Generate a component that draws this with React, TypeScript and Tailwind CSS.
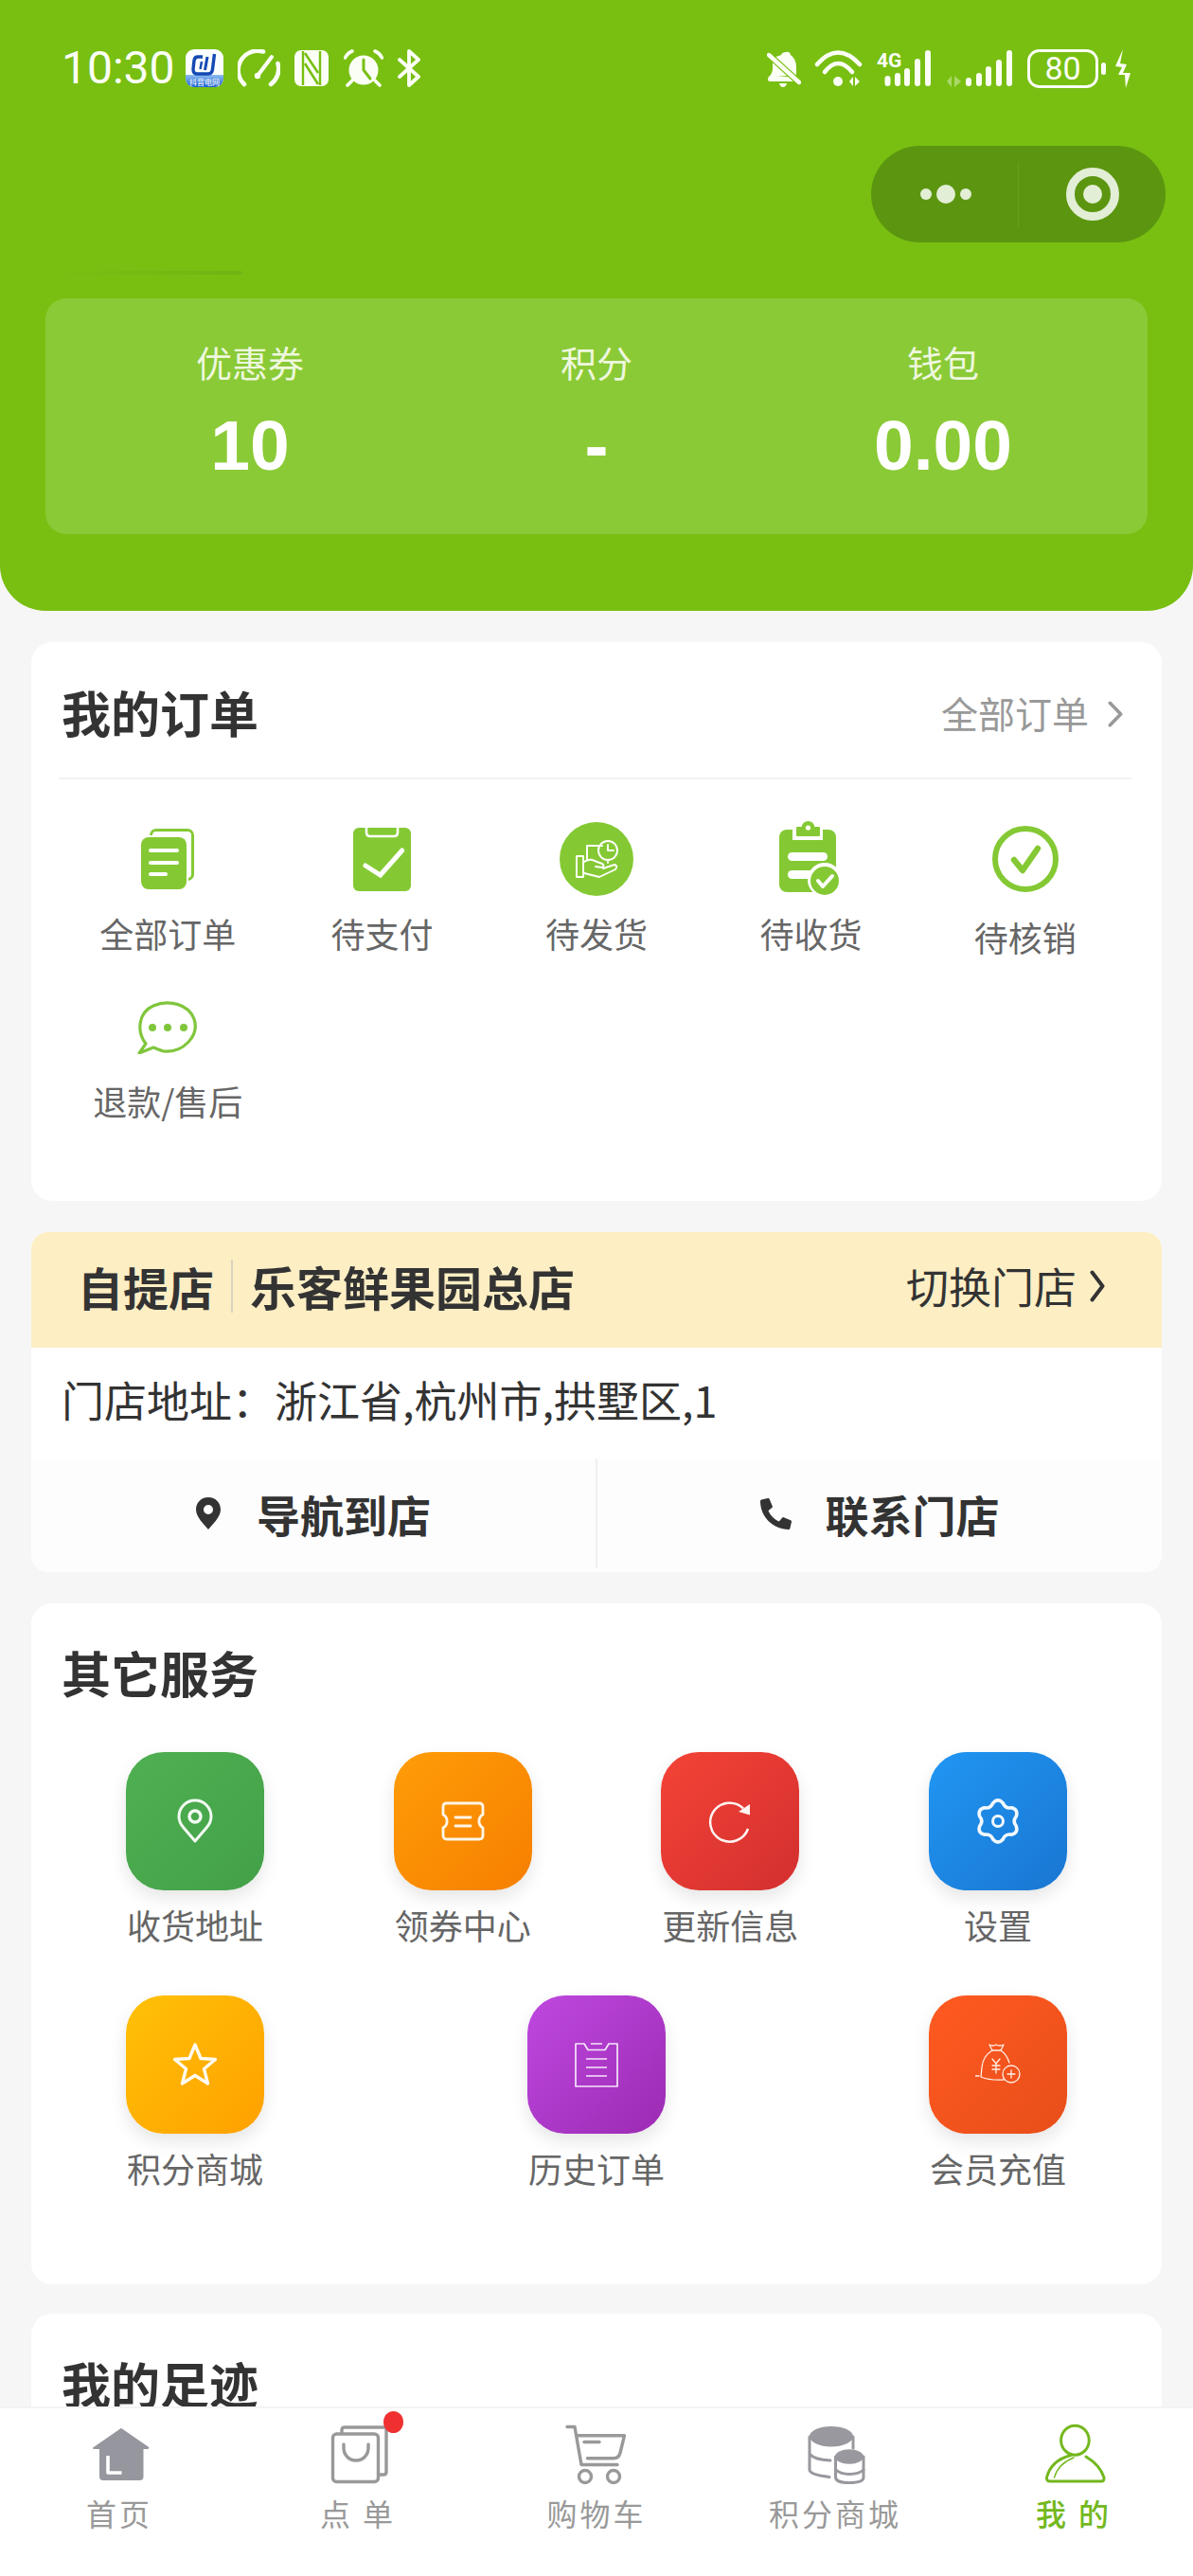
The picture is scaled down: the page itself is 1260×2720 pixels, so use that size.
import React from "react";
import { FaPhoneAlt } from "react-icons/fa";

const G = "#84c934";

const gearPath = (() => {
  const c = 24;
  const pt = (deg: number, r: number) => {
    const a = (deg * Math.PI) / 180;
    return `${(c + r * Math.cos(a)).toFixed(2)} ${(c + r * Math.sin(a)).toFixed(2)}`;
  };
  let d = `M${pt(-90 - 15, 20)}`;
  for (let i = 0; i < 6; i++) {
    const a = -90 + i * 60;
    d += ` Q${pt(a, 25)} ${pt(a + 15, 20)}`;
    d += ` Q${pt(a + 30, 15)} ${pt(a + 45, 20)}`;
  }
  return d + " Z";
})();

function AppIcon() {
  return (
    <svg width="40" height="40" viewBox="0 0 40 40">
      <defs>
        <linearGradient id="appBlue" x1="0" y1="0" x2="0" y2="1">
          <stop offset="0" stopColor="#8fbdf0" />
          <stop offset="1" stopColor="#1a5fd0" />
        </linearGradient>
        <clipPath id="appClip">
          <rect width="40" height="40" rx="9" />
        </clipPath>
      </defs>
      <g clipPath="url(#appClip)">
        <rect width="40" height="40" fill="#fbfdff" />
        <rect y="27" width="40" height="13" fill="url(#appBlue)" />
      </g>
      <path d="M18 8 H13 Q9.5 8 9 12 L8 21 Q8 26 12 26 H24 Q28 26 28.5 21 L30.5 5" fill="none" stroke="#1349b4" strokeWidth="3.4" />
      <path d="M23 8 L20.5 22" fill="none" stroke="#1349b4" strokeWidth="3" />
      <path d="M17 13 L15.5 21" fill="none" stroke="#1349b4" strokeWidth="2.4" />
      <text x="20" y="38" textAnchor="middle" fontSize="8" fill="#ffffff" fontFamily="'Noto Sans CJK SC', sans-serif">抖音电网</text>
    </svg>
  );
}

function Gauge() {
  return (
    <svg width="45" height="40" viewBox="0 0 45 40" fill="none" stroke="#fbfef5" strokeWidth="4.6" strokeLinecap="round">
      <path d="M7 37 A20.5 20.5 0 0 1 27 2.5" />
      <path d="M42.5 15 A20.5 20.5 0 0 1 35 37" />
      <path d="M21 28 L36 8" strokeWidth="4" />
      <circle cx="21" cy="28" r="3.2" fill="#fbfef5" stroke="none" />
    </svg>
  );
}

function Nfc() {
  return (
    <svg width="36" height="40" viewBox="0 0 36 40" fill="none">
      <rect y="1" width="36" height="38" rx="7" fill="#fbfef5" />
      <path d="M9 2 V38 M27 2 V38" stroke="#78bf12" strokeWidth="2.4" />
      <path d="M11 4 L25 25 M11 15 L25 37" stroke="#78bf12" strokeWidth="2.6" />
    </svg>
  );
}

function Alarm() {
  return (
    <svg width="42" height="40" viewBox="0 0 42 40" fill="none" strokeLinecap="round">
      <circle cx="21" cy="22" r="15.5" fill="#fbfef5" />
      <path d="M21 11 V22 L28 31" stroke="#78bf12" strokeWidth="3" />
      <path d="M1.5 9 Q4 4 9 2 M33 2 Q38 4 40.5 9" stroke="#fbfef5" strokeWidth="3.6" />
      <path d="M9 33 L4 38 M33 33 L38 38" stroke="#fbfef5" strokeWidth="3.6" />
    </svg>
  );
}

function Bluetooth() {
  return (
    <svg width="26" height="40" viewBox="0 0 26 40" fill="none" stroke="#fbfef5" strokeWidth="3.8" strokeLinejoin="round" strokeLinecap="round">
      <path d="M3 11 L23 29 L13 38 V2 L23 11 L3 29" />
    </svg>
  );
}

function BellOff() {
  return (
    <svg width="36" height="40" viewBox="0 0 36 40" fill="none">
      <path d="M20 3 Q24 2 25 6 Q31 10 31 19 V27 L1 30 Q6 26 6 20 V11 Q10 7 15 6 Q16 3 20 3 Z" fill="#fbfef5" />
      <path d="M1 32 Q1 29 4 29 H29 L34 34 H2 Z" fill="#fbfef5" />
      <path d="M13 36 H21 Q20 40 17 40 Q14 40 13 36 Z" fill="#fbfef5" />
      <path d="M1 5 L35 36" stroke="#78bf12" strokeWidth="7" />
      <path d="M2 6 L34 35" stroke="#fbfef5" strokeWidth="4.4" strokeLinecap="round" />
    </svg>
  );
}

function Wifi() {
  return (
    <svg width="51" height="40" viewBox="0 0 51 40" fill="none" stroke="#fbfef5" strokeLinecap="round">
      <path d="M3 16 Q25 -9 48 16" strokeWidth="4.6" />
      <path d="M11 24 Q25 6 40 24" strokeWidth="4.6" />
      <circle cx="25" cy="34" r="5" fill="#fbfef5" stroke="none" />
      <path d="M37 34 L41 29 V39 Z M43 29 V39 L48 34 Z" fill="#fbfef5" stroke="none" />
    </svg>
  );
}

function Bars({ xs, tops }: { xs: number[]; tops: number[] }) {
  return (
    <>
      {xs.map((x, i) => (
        <rect key={i} x={x - 3} y={tops[i]} width="6" height={39 - tops[i]} rx="3" fill="#fbfef5" />
      ))}
    </>
  );
}

function Signal4G() {
  return (
    <svg width="58" height="40" viewBox="0 0 58 40">
      <text x="0" y="19" fontSize="21" fontWeight="700" fill="#fbfef5" fontFamily="'Roboto', sans-serif">4G</text>
      <Bars xs={[11.5, 22, 32, 43, 54]} tops={[28, 25, 20, 10, 1]} />
    </svg>
  );
}

function Signal2() {
  return (
    <svg width="71" height="40" viewBox="0 0 71 40">
      <path d="M1 34 L6 28 V40 Z M9 28 V40 L16 34 Z" fill="#a9d868" />
      <Bars xs={[24, 35, 45, 56, 67]} tops={[30, 25, 18, 11, 1]} />
    </svg>
  );
}

function Battery() {
  return (
    <svg width="85" height="41" viewBox="0 0 85 41" fill="none">
      <rect x="1.5" y="1.5" width="72" height="38" rx="11" stroke="#fbfef5" strokeWidth="3" />
      <text x="37.5" y="32" textAnchor="middle" fontSize="34" fill="#fbfef5" fontFamily="'Roboto', sans-serif">80</text>
      <rect x="78" y="14" width="5" height="13" rx="2.5" fill="#fbfef5" />
    </svg>
  );
}

function Bolt() {
  return (
    <svg width="18" height="41" viewBox="0 0 18 41">
      <polygon points="9,0 1,18 8,19 4,27 11,27 12,41 17,25 9,25 13,16 6,15" fill="#fbfef5" />
    </svg>
  );
}

function Chevron({ color, w, h, sw }: { color: string; w: number; h: number; sw: number }) {
  return (
    <svg width={w} height={h} viewBox={`0 0 ${w} ${h}`} fill="none" stroke={color} strokeWidth={sw} strokeLinecap="round" strokeLinejoin="round">
      <path d={`M${sw / 2 + 0.5} ${sw / 2 + 0.5} L${w - sw / 2 - 0.5} ${h / 2} L${sw / 2 + 0.5} ${h - sw / 2 - 0.5}`} />
    </svg>
  );
}

function OrderAll() {
  return (
    <svg width="56" height="64" viewBox="0 0 56 64">
      <rect x="9" y="0" width="47" height="55" rx="7" fill={G} />
      <rect x="12" y="3" width="41" height="49" rx="4" fill="#fff" />
      <rect x="-1" y="7" width="51" height="58" rx="9" fill="#fff" />
      <rect x="0" y="9" width="48" height="55" rx="8" fill={G} />
      <path d="M10 23 H38 M10 36 H38 M10 48 H26" stroke="#fff" strokeWidth="4" strokeLinecap="round" fill="none" />
    </svg>
  );
}

function OrderPay() {
  return (
    <svg width="61" height="67" viewBox="0 0 61 67" fill="none">
      <rect width="61" height="67" rx="6" fill={G} />
      <path d="M14 0 V5 Q14 9 18 9 H43 Q47 9 47 5 V0" stroke="#fff" strokeWidth="2.6" />
      <path d="M13 40 L28.7 50 L51.7 24" stroke="#fff" strokeWidth="5" strokeLinecap="round" />
    </svg>
  );
}

function OrderShip() {
  return (
    <svg width="78" height="78" viewBox="-39 -39 78 78" fill="none">
      <circle r="39" fill={G} />
      <g stroke="#fff" strokeWidth="1.9" strokeLinejoin="round" strokeLinecap="round">
        <rect x="-21" y="-3" width="7" height="22" />
        <path d="M-10 0 V-14 H6" />
        <path d="M12 2 V4" />
        <circle cx="12" cy="-9" r="10" />
        <path d="M12 -15 V-9 H18" />
        <path d="M-13 3 Q-7 -1 -2 2 L6 5 Q9 7 6 9 L-1 8" />
        <path d="M-13 15 L3 19 L20 11 Q23 7 19 6 L7 10" />
      </g>
    </svg>
  );
}

function OrderReceive() {
  return (
    <svg width="66" height="80" viewBox="0 0 66 80" fill="none">
      <rect x="0" y="9" width="60" height="66" rx="8" fill={G} />
      <rect x="14" y="8" width="32" height="12" fill="#fff" />
      <rect x="18" y="6" width="25" height="10" rx="1" fill={G} />
      <circle cx="30.5" cy="7" r="7" fill={G} />
      <circle cx="30.5" cy="7" r="2.6" fill="#fff" />
      <rect x="9" y="33" width="42" height="9" rx="4.5" fill="#fff" />
      <rect x="9" y="52" width="30" height="9" rx="4.5" fill="#fff" />
      <circle cx="48" cy="62" r="18" fill="#fff" />
      <circle cx="48" cy="63" r="15" fill={G} />
      <path d="M41 63 L46 69 L56 58" stroke="#fff" strokeWidth="4" strokeLinecap="round" strokeLinejoin="round" />
    </svg>
  );
}

function OrderVerify() {
  return (
    <svg width="70" height="76" viewBox="-35 -35 70 76" fill="none">
      <circle r="32" cy="3" stroke={G} strokeWidth="6" />
      <path d="M-12 4 L-3 15 L13 -8" stroke={G} strokeWidth="6.4" strokeLinecap="round" strokeLinejoin="round" />
    </svg>
  );
}

function OrderChat() {
  return (
    <svg width="64" height="56" viewBox="0 0 64 56" fill="none">
      <path d="M9 45 C-1 32 1 12 17 5 C33 -2 54 3 60 19 C66 37 48 55 28 53 C24 52 20 50 17 49 L2 55 L9 45 Z" stroke="#80c63c" strokeWidth="3.2" strokeLinejoin="round" />
      <circle cx="16" cy="28" r="4" fill="#80c63c" />
      <circle cx="32" cy="28" r="4" fill="#80c63c" />
      <circle cx="49" cy="28" r="4" fill="#80c63c" />
    </svg>
  );
}

function TPin() {
  return (
    <svg width="48" height="48" viewBox="0 0 48 48" fill="none" stroke="#f4fbf4" strokeWidth="3" strokeLinejoin="round">
      <path d="M24 45 L12 31 C8.5 27 7 23 7 19 A17 17 0 0 1 41 19 C41 23 39.5 27 36 31 Z" />
      <circle cx="24" cy="19" r="6" strokeWidth="3.4" />
    </svg>
  );
}
function TTicket() {
  return (
    <svg width="48" height="48" viewBox="0 0 48 48" fill="none" stroke="#fff6e8" strokeWidth="2.8" strokeLinecap="round" strokeLinejoin="round">
      <path d="M7 5 H41 Q45 5 45 9 V17 A8 8 0 0 0 45 31 V39 Q45 43 41 43 H7 Q3 43 3 39 V31 A8 8 0 0 0 3 17 V9 Q3 5 7 5 Z" />
      <path d="M16 20 H32 M16 29 H32" />
    </svg>
  );
}
function TRefresh() {
  return (
    <svg width="48" height="48" viewBox="0 0 48 48" fill="none">
      <path d="M43 32 A20.5 20.5 0 1 1 38 10.5" stroke="#fff4f2" strokeWidth="2.5" />
      <polygon points="33,14 45,17.5 45,6" fill="#fff4f2" />
    </svg>
  );
}
function TGear() {
  return (
    <svg width="48" height="48" viewBox="0 0 48 48" fill="none" stroke="#f2f8ff" strokeWidth="3.6" strokeLinejoin="round">
      <path d={gearPath} />
      <circle cx="24" cy="24" r="5.5" strokeWidth="3" />
    </svg>
  );
}
function TStar() {
  return (
    <svg width="48" height="48" viewBox="0 0 48 48" fill="none" stroke="#fffaf0" strokeWidth="3.4" strokeLinejoin="round">
      <polygon points="24,3 30,17.5 45.5,18.5 33.5,28.5 37.5,44 24,35.5 10.5,44 14.5,28.5 2.5,18.5 18,17.5" />
    </svg>
  );
}
function TList() {
  return (
    <svg width="48" height="48" viewBox="0 0 48 48" fill="none" stroke="#f6e6fb" strokeWidth="1.7">
      <path d="M2 2 H11 L15 8.5 H33 L37 2 H46 V47 H2 Z" strokeLinejoin="round" />
      <path d="M18 2 H30 M13 18 H35 M13 27 H35 M13 36 H35" />
    </svg>
  );
}
function TBag() {
  return (
    <svg width="48" height="48" viewBox="0 0 48 48" fill="none" stroke="#fff0e8" strokeWidth="1.3" strokeLinejoin="round" strokeLinecap="round">
      <path d="M15 3 Q19 5 22 3 Q26 5 30 3 L27 9 H18 Z" />
      <path d="M18 9 Q8 15 7 27 L6 37 Q16 41 30 40 M27 9 Q33 13 36 22" />
      <path d="M18 18 L22 23 L26 18 M22 23 V33 M18 25 H26 M18 29 H26" />
      <circle cx="38" cy="34" r="9" />
      <path d="M38 30 V38 M34 34 H42 M0 36 H4" />
    </svg>
  );
}

function TabHome() {
  return (
    <svg width="72" height="66" viewBox="0 0 72 66" fill="none">
      <path d="M38 7 L67 27 Q67 28 65 28 H61.5 V57 Q61.5 61 57.5 61 H19 Q15 61 15 57 V28 H11 Q9 28 9 27 Z" fill="#96979e" />
      <path d="M38 7 L9 27 L38 7 L67 27" stroke="#96979e" strokeWidth="2" strokeLinejoin="round" />
      <path d="M24 35 V53 H38.5" stroke="#fff" strokeWidth="3.6" strokeLinejoin="round" />
    </svg>
  );
}
function TabBag() {
  return (
    <svg width="72" height="66" viewBox="0 0 72 66" fill="none" stroke="#999" strokeWidth="3.4" strokeLinejoin="round" strokeLinecap="round">
      <path d="M19 11 V8 Q19 5 22 5 H66 V52 Q66 55 63 55 H58" />
      <rect x="9.5" y="12" width="48" height="50.5" rx="4" />
      <path d="M21 23 V27 A13 13 0 0 0 47 27 V23" />
    </svg>
  );
}
function TabCart() {
  return (
    <svg width="72" height="66" viewBox="0 0 72 66" fill="none" stroke="#999" strokeWidth="3.4" strokeLinejoin="round" strokeLinecap="round">
      <path d="M5 4.5 H13 L20 44.5 H58" />
      <path d="M15 13.7 H65.5 L61 32 Q59.5 37.7 54 37.7 H26.5" />
      <path d="M23 20.5 H39" />
      <circle cx="24" cy="57" r="6.5" />
      <circle cx="54" cy="57" r="6.5" />
    </svg>
  );
}
function TabCoins() {
  return (
    <svg width="72" height="66" viewBox="0 0 72 66" fill="none" stroke="#98989e" strokeWidth="3" strokeLinecap="round">
      <ellipse cx="32" cy="14.7" rx="23" ry="10.8" fill="#98989e" stroke="none" />
      <path d="M9 15 V50 Q9.5 55 30 57.5" />
      <path d="M10 34 Q14 39 31 40" />
      <path d="M55 15 V27" />
      <ellipse cx="51" cy="36" rx="15" ry="7.7" fill="#98989e" stroke="none" />
      <path d="M36.5 36 V58 Q37 63.5 51 63.5 Q66 63.5 66 58 V36" />
      <path d="M37 50 Q42 54.5 51 54.5 Q61 54.5 66 50" />
    </svg>
  );
}
function TabMe() {
  return (
    <svg width="72" height="66" viewBox="0 0 72 66" fill="none" stroke="#74b81f" strokeWidth="3" strokeLinecap="round" strokeLinejoin="round">
      <ellipse cx="37.4" cy="18.7" rx="14.8" ry="15.5" />
      <path d="M49 36 Q64 45 68 58 Q68.5 62 65 62 H11 Q7 62 7.5 58 Q12 40 33 34.5" />
      <path d="M15.5 58 Q20 43 36 37" strokeWidth="1.4" />
    </svg>
  );
}

const orders = [
  { label: "全部订单", icon: <OrderAll /> },
  { label: "待支付", icon: <OrderPay /> },
  { label: "待发货", icon: <OrderShip /> },
  { label: "待收货", icon: <OrderReceive /> },
  { label: "待核销", icon: <OrderVerify />, low: true },
];

const servicesTop = [
  { label: "收货地址", cls: "bg-linear-to-br from-[#4fb052] to-[#43a047]", icon: <TPin /> },
  { label: "领券中心", cls: "bg-linear-to-br from-[#ff9c08] to-[#f67f00]", icon: <TTicket /> },
  { label: "更新信息", cls: "bg-linear-to-br from-[#f44336] to-[#d32f2f]", icon: <TRefresh /> },
  { label: "设置", cls: "bg-linear-to-br from-[#2196f3] to-[#1976d2]", icon: <TGear /> },
];
const servicesBottom = [
  { label: "积分商城", cls: "bg-linear-to-br from-[#ffc107] to-[#ffa000]", icon: <TStar /> },
  { label: "历史订单", cls: "bg-linear-to-br from-[#bf48e0] to-[#9c2ab3]", icon: <TList /> },
  { label: "会员充值", cls: "bg-linear-to-br from-[#ff5a20] to-[#e84e1a]", icon: <TBag /> },
];

function Tile({ label, cls, icon }: { label: string; cls: string; icon: React.ReactNode }) {
  return (
    <div className="flex w-[282px] flex-col items-center">
      <div className={`flex h-[146px] w-[146px] items-center justify-center rounded-[40px] shadow-[0_8px_18px_rgba(0,0,0,0.1)] ${cls}`}>{icon}</div>
      <div className="mt-[14px] text-[36px] leading-[44px] text-[#666666]">{label}</div>
    </div>
  );
}

function OrderItem({ label, icon, low }: { label: string; icon: React.ReactNode; low?: boolean }) {
  return (
    <div className="flex flex-col items-center">
      <div className="flex h-[78px] items-center justify-center">{icon}</div>
      <div className={`text-[36px] leading-[44px] text-[#666666] ${low ? "mt-[21px]" : "mt-[17px]"}`}>{label}</div>
    </div>
  );
}

const tabs = [
  { label: "首页", icon: <TabHome /> },
  { label: "点 单", icon: <TabBag />, dot: true },
  { label: "购物车", icon: <TabCart /> },
  { label: "积分商城", icon: <TabCoins /> },
  { label: "我 的", icon: <TabMe />, active: true },
];

export default function App() {
  return (
    <div className="relative flex h-[2720px] w-[1260px] flex-col overflow-hidden bg-[#f6f6f6] font-['Noto_Sans_CJK_SC','Noto_Sans',sans-serif]">
      <div className="flex min-h-0 flex-1 flex-col overflow-hidden">
        {/* header */}
        <header className="relative flex h-[645px] shrink-0 flex-col rounded-b-[48px] bg-[#78bf12]">
          <div className="mt-[52px] flex h-[40px] items-center justify-between px-[65px]">
            <div className="flex items-center">
              <span className="w-[116px] whitespace-nowrap font-['Roboto',sans-serif] text-[48px] font-normal leading-[40px] text-[#fbfef5]">10:30</span>
              <span className="ml-[15px] flex"><AppIcon /></span>
              <span className="ml-[15px] flex"><Gauge /></span>
              <span className="ml-[15px] flex"><Nfc /></span>
              <span className="ml-[16px] flex"><Alarm /></span>
              <span className="ml-[14px] flex"><Bluetooth /></span>
            </div>
            <div className="flex items-center">
              <BellOff />
              <span className="ml-[14px] flex"><Wifi /></span>
              <span className="ml-[15px] flex"><Signal4G /></span>
              <span className="ml-[15px] flex"><Signal2 /></span>
              <span className="ml-[15px] flex"><Battery /></span>
              <span className="ml-[7px] flex"><Bolt /></span>
            </div>
          </div>

          {/* capsule */}
          <div className="mt-[62px] mr-[29px] flex h-[102px] w-[311px] items-center self-end rounded-full bg-[#5c9610]">
            <div className="flex h-full w-[155px] items-center justify-center gap-[5px] pl-[2px]">
              <span className="h-[12px] w-[12px] rounded-full bg-[#e3eed6]" />
              <span className="h-[20px] w-[20px] rounded-full bg-[#e3eed6]" />
              <span className="h-[12px] w-[12px] rounded-full bg-[#e3eed6]" />
            </div>
            <div className="h-[68px] w-px bg-[#6aa21c]" />
            <div className="flex flex-1 items-center justify-center">
              <div className="flex h-[56px] w-[56px] items-center justify-center rounded-full border-[9px] border-[#e3eed6]">
                <span className="h-[20px] w-[20px] rounded-full bg-[#e3eed6]" />
              </div>
            </div>
          </div>

          {/* faint line */}
          <div className="absolute left-[60px] top-[286px] h-[4px] w-[196px] rounded-full bg-linear-to-r from-[#78bf12] to-[#70b412]" />

          {/* stats */}
          <div className="mx-[48px] mt-[59px] grid h-[249px] grid-cols-3 rounded-[22px] bg-[#8aca36] px-[33px] pt-[44px] text-center">
            {[
              ["优惠券", "10"],
              ["积分", "-"],
              ["钱包", "0.00"],
            ].map(([k, v]) => (
              <div key={k}>
                <div className="text-[38px] leading-[46px] text-[#eef7de]">{k}</div>
                <div className="mt-[28px] font-['Liberation_Sans',sans-serif] text-[75px] font-bold leading-[74px] text-white">{v}</div>
              </div>
            ))}
          </div>
        </header>

        <main className="flex flex-col px-[33px]">
          {/* orders */}
          <section className="mt-[33px] h-[590px] shrink-0 rounded-[22px] bg-white">
            <div className="flex h-[143px] items-start justify-between pl-[32px] pr-[41px] pt-[44px]">
              <h2 className="text-[52px] font-bold leading-[60px] text-[#333333]">我的订单</h2>
              <div className="flex h-[60px] items-center">
                <span className="text-[39px] leading-[46px] text-[#999999]">全部订单</span>
                <span className="ml-[20px] mt-[4px] flex"><Chevron color="#999999" w={16} h={28} sw={3.6} /></span>
              </div>
            </div>
            <div className="ml-[29px] mr-[32px] h-[2px] bg-[#f2f2f2]" />
            <div className="grid grid-cols-5 px-[31px] pt-[45px]">
              {orders.map((o) => (
                <OrderItem key={o.label} {...o} />
              ))}
              <div className="mt-[35px] flex flex-col items-center">
                <div className="flex h-[78px] items-center justify-center"><OrderChat /></div>
                <div className="mt-[16px] whitespace-nowrap text-[36px] leading-[44px] text-[#666666]">退款/售后</div>
              </div>
            </div>
          </section>

          {/* store */}
          <section className="mt-[33px] h-[359px] shrink-0 overflow-hidden rounded-[18px] bg-white">
            <div className="flex h-[122px] items-center justify-between bg-[#fdeec4] pb-[8px] pl-[49px] pr-[60px]">
              <div className="flex items-center">
                <span className="text-[48px] font-bold leading-[56px] text-[#333333]">自提店</span>
                <span className="ml-[18px] h-[56px] w-[2px] bg-[#d9d2bb]" />
                <span className="ml-[18px] text-[49px] font-bold leading-[56px] text-[#333333]">乐客鲜果园总店</span>
              </div>
              <div className="flex items-center">
                <span className="text-[45px] leading-[56px] text-[#333333]">切换门店</span>
                <span className="ml-[14px] flex"><Chevron color="#333333" w={16} h={34} sw={4} /></span>
              </div>
            </div>
            <div className="flex h-[117px] items-start pl-[32px] pt-[28px] text-[45px] leading-[54px] text-[#333333]">门店地址：浙江省,杭州市,拱墅区,1</div>
            <div className="flex h-[120px] bg-[#fdfdfd] pb-[4px]">
              <div className="flex flex-1 items-center justify-center gap-[38px] border-r-2 border-[#f0f0f0]">
                <svg width="26" height="34" viewBox="0 0 26 34">
                  <path fillRule="evenodd" d="M13 0 C21 0 26 6 26 13 C26 21 17 29 13 34 C9 29 0 21 0 13 C0 6 5 0 13 0 Z M13 8 A5 5 0 1 0 13 18 A5 5 0 1 0 13 8 Z" fill="#333333" />
                </svg>
                <span className="text-[46px] font-bold leading-[56px] text-[#333333]">导航到店</span>
              </div>
              <div className="flex flex-1 items-center justify-center gap-[36px]">
                <FaPhoneAlt className="h-[33px] w-[33px] text-[#333333]" />
                <span className="text-[46px] font-bold leading-[56px] text-[#333333]">联系门店</span>
              </div>
            </div>
          </section>

          {/* services */}
          <section className="mt-[33px] h-[719px] shrink-0 rounded-[22px] bg-white pt-[43px]">
            <h2 className="pl-[32px] text-[52px] font-bold leading-[60px] text-[#333333]">其它服务</h2>
            <div className="mt-[54px] flex justify-between px-[32px]">
              {servicesTop.map((s) => (
                <Tile key={s.label} {...s} />
              ))}
            </div>
            <div className="mt-[53px] flex justify-between px-[32px]">
              {servicesBottom.map((s) => (
                <Tile key={s.label} {...s} />
              ))}
            </div>
          </section>

          {/* footprints */}
          <section className="mt-[31px] h-[200px] shrink-0 rounded-[22px] bg-white pt-[44px]">
            <h2 className="pl-[32px] text-[52px] font-bold leading-[60px] text-[#333333]">我的足迹</h2>
          </section>
        </main>
      </div>

      {/* tab bar */}
      <nav className="grid h-[179px] shrink-0 grid-cols-5 border-t-2 border-[#f3f3f3] bg-white pt-[15px]">
        {tabs.map((t) => (
          <div key={t.label} className="flex flex-col items-center">
            <div className="relative h-[66px] w-[72px]">
              {t.icon}
              {t.dot && <span className="absolute left-[63px] top-[-12px] h-[23px] w-[21px] rounded-[50%] bg-[#f03030]" />}
            </div>
            <span className={`mt-[7px] text-[32px] leading-[44px] tracking-[3px] ${t.active ? "font-medium text-[#74b81f]" : "text-[#999999]"}`}>{t.label}</span>
          </div>
        ))}
      </nav>
    </div>
  );
}
